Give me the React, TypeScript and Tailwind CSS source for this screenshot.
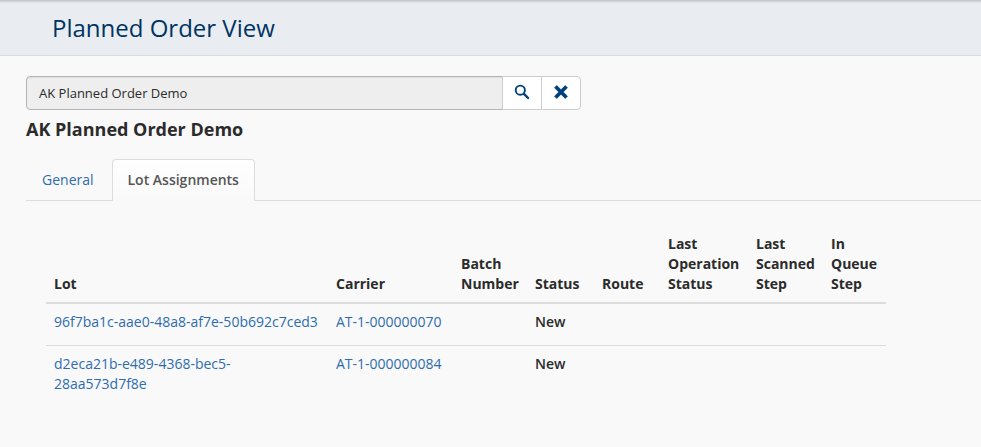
const th = "px-2 pb-2 align-bottom text-left font-bold leading-5";
const td = "px-2 pt-2 align-top leading-5";
const link = "text-[#2d6cae]";

export default function App() {
  return (
    <div className="h-[447px] w-full overflow-hidden bg-[#f9f9f9] font-['Open_Sans',sans-serif] text-[14px] text-[#2b2b2b]">
      <header className="h-14 border-t border-b border-t-[#c6c8cb] border-b-[#d9dcdf] bg-[#e9edf2] pl-[52px] shadow-[inset_0_3px_2px_-2px_rgba(0,0,0,0.14)]">
        <h1 className="text-[24px] leading-[54px] text-[#003462]">Planned Order View</h1>
      </header>
      <div className="pl-[26px] pt-5">
        <div className="flex h-[34px] w-[555px] text-[13px]">
          <div className="flex w-[477px] items-center rounded-l-[4px] border border-[#b3b5b8] bg-[#eee] pl-3 pt-px shadow-[inset_0_1px_1px_rgba(0,0,0,0.075)]">AK Planned Order Demo</div>
          <button className="-ml-px flex w-10 items-center justify-center border border-[#ccc] bg-white pb-[2px]">
            <svg width="16" height="16" viewBox="0 0 16 16" fill="none" stroke="#00407a">
              <circle cx="6.3" cy="6.2" r="4.6" strokeWidth="1.9" />
              <path d="M9.9 9.8L14.1 14" strokeWidth="2.4" strokeLinecap="round" />
            </svg>
          </button>
          <button className="-ml-px flex w-10 items-center justify-center rounded-r-[4px] border border-[#ccc] bg-white pb-[2px]">
            <svg width="16" height="16" viewBox="0 0 16 16" fill="#00407a" stroke="#00407a" strokeWidth="0.8" strokeLinejoin="round">
              <path d="M3.8 1.6L8 5.8L12.2 1.6L14.4 3.8L10.2 8L14.4 12.2L12.2 14.4L8 10.2L3.8 14.4L1.6 12.2L5.8 8L1.6 3.8Z" />
            </svg>
          </button>
        </div>
        <h2 className="pt-[7px] text-[18px] font-bold leading-6">AK Planned Order Demo</h2>
        <nav className="mt-[18px] flex h-[42px] border-b border-[#ddd]">
          <div className={"w-[86px] pl-4 pt-[11px] leading-5 " + link}>General</div>
          <div className="h-[42px] w-[143px] rounded-t-[4px] border border-b-0 border-[#ddd] bg-linear-to-b from-white to-[#f9f9f9] pl-[14.5px] pt-[10px] font-semibold leading-5 text-[#555]">Lot Assignments</div>
        </nav>
        <table className="ml-5 mt-[25px] w-[840px] table-fixed border-collapse">
          <colgroup>
            <col className="w-[282px]" /><col className="w-[125px]" /><col className="w-[74px]" /><col className="w-[67px]" /><col className="w-[66px]" /><col className="w-[88px]" /><col className="w-[75px]" /><col className="w-[63px]" />
          </colgroup>
          <thead>
            <tr className="h-[77px] border-b-2 border-[#ddd]">
              <th className={th}>Lot</th>
              <th className={th}>Carrier</th>
              <th className={th}>Batch<br />Number</th>
              <th className={th}>Status</th>
              <th className={th}>Route</th>
              <th className={th}>Last<br />Operation<br />Status</th>
              <th className={th}>Last<br />Scanned<br />Step</th>
              <th className={th}>In<br />Queue<br />Step</th>
            </tr>
          </thead>
          <tbody>
            <tr className="h-[42px]">
              <td className={td + " " + link}>96f7ba1c-aae0-48a8-af7e-50b692c7ced3</td>
              <td className={td + " " + link}>AT-1-000000070</td>
              <td />
              <td className={td + " font-semibold"}>New</td>
              <td colSpan={4} />
            </tr>
            <tr className="h-[58px] border-t border-[#ddd]">
              <td className={td + " " + link}>d2eca21b-e489-4368-bec5-<br />28aa573d7f8e</td>
              <td className={td + " " + link}>AT-1-000000084</td>
              <td />
              <td className={td + " font-semibold"}>New</td>
              <td colSpan={4} />
            </tr>
          </tbody>
        </table>
      </div>
    </div>
  );
}
